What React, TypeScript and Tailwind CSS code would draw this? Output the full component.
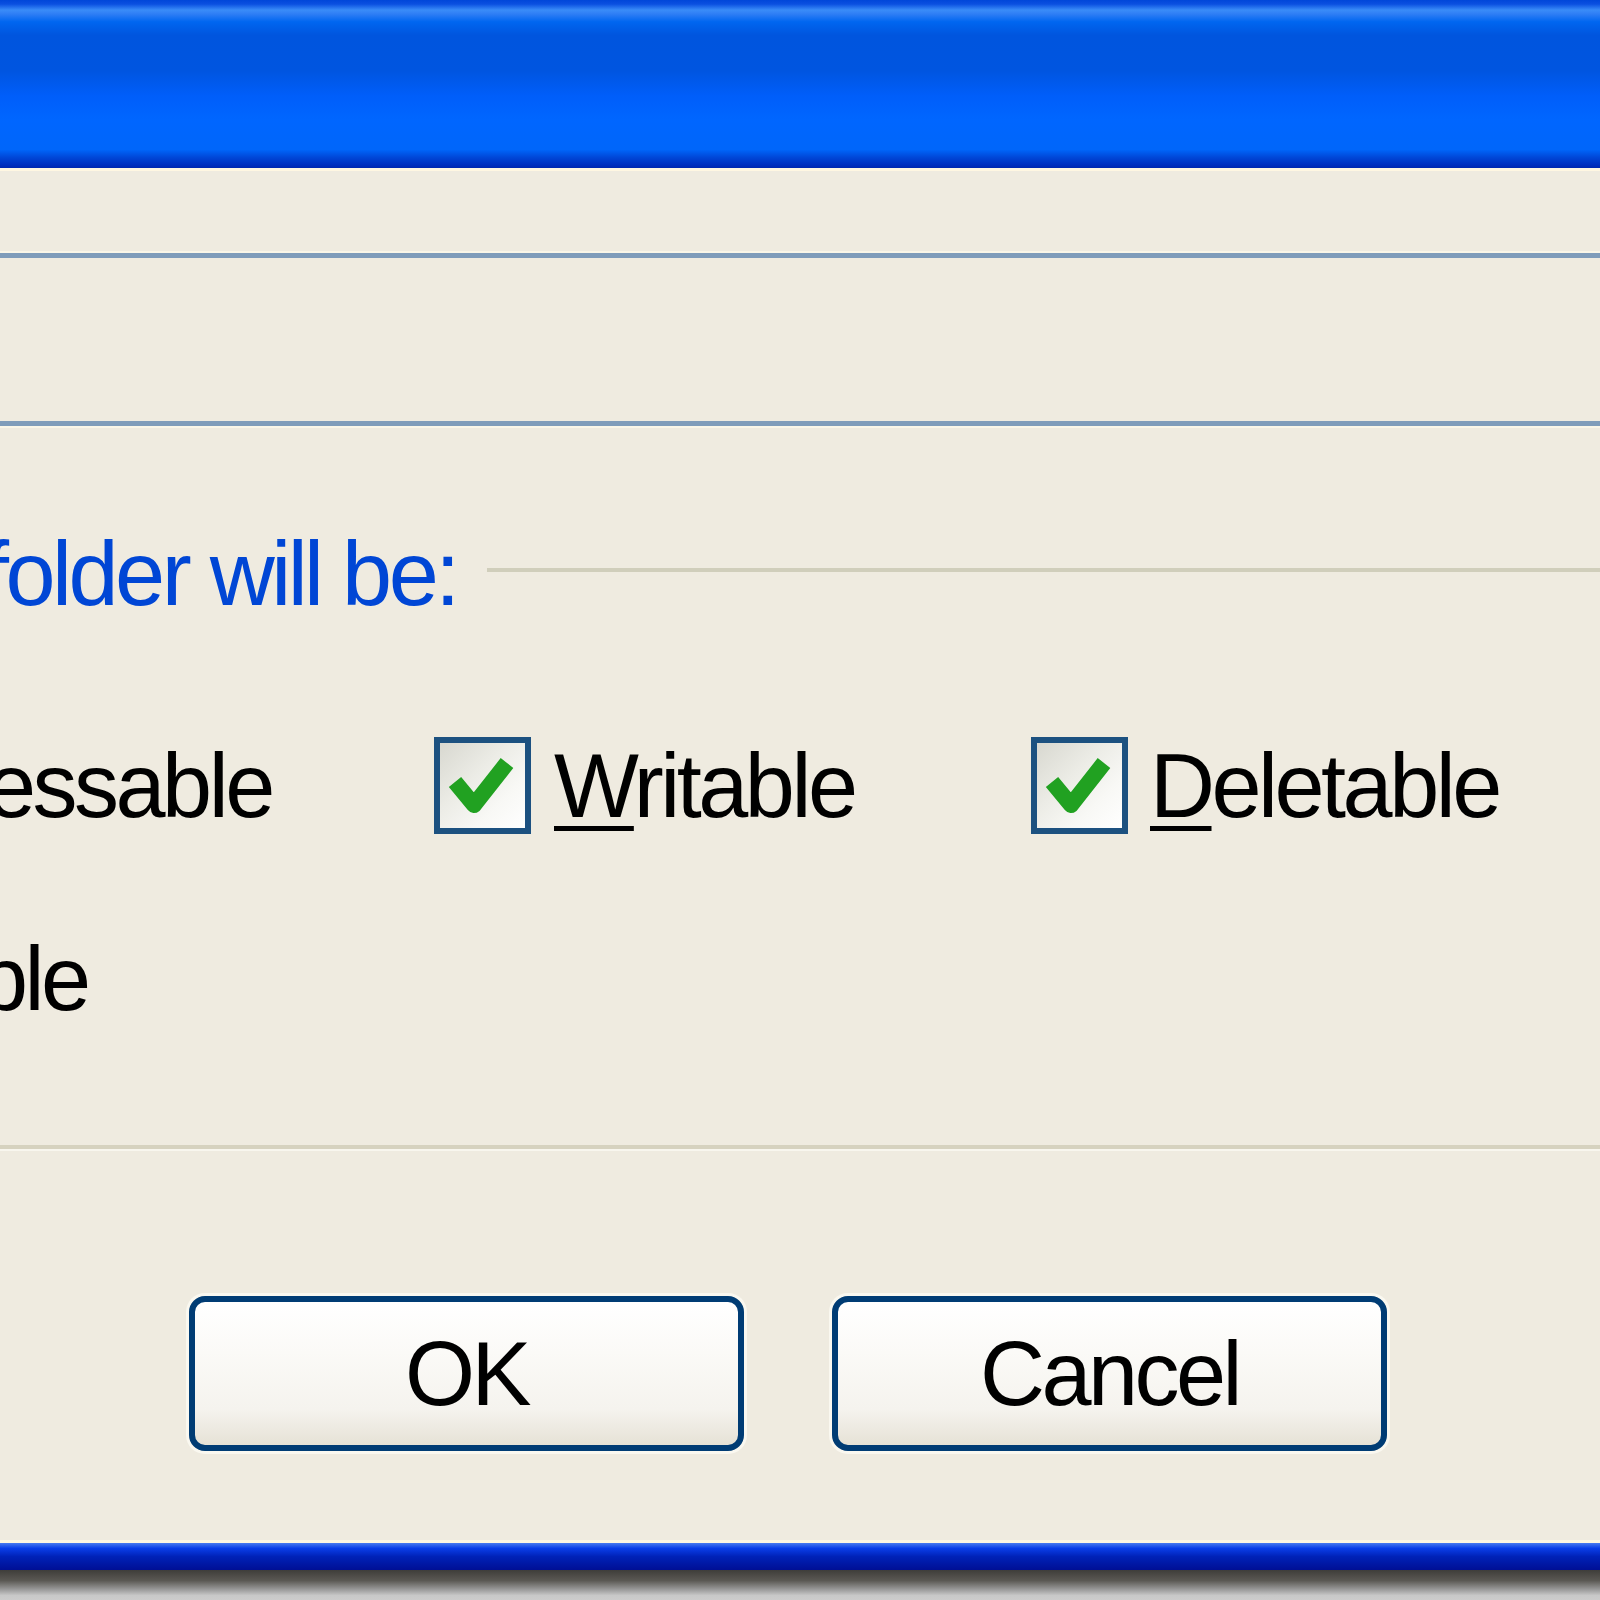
import React from 'react'

const font = { fontFamily: '"Liberation Sans", Arial, sans-serif' }

function CheckBox() {
  return (
    <div className="w-[97px] h-[97px] shrink-0 border-[6px] border-[#1c5180] bg-[linear-gradient(135deg,#d8d8d0_0%,#ececE6_40%,#f8f8f5_70%,#ffffff_100%)]">
      <svg viewBox="0 0 85 85" className="w-full h-full">
        <path d="M15 39 L34 62 L67 20" fill="none" stroke="#21a121" strokeWidth="16" strokeLinejoin="round" />
      </svg>
    </div>
  )
}

function XpButton({ label }: { label: string }) {
  return (
    <button className="w-[555px] h-[155px] rounded-[16px] border-[6px] border-[#003c74] bg-[linear-gradient(to_bottom,#ffffff_0%,#fbfaf7_35%,#f5f3ee_75%,#e6e2d6_100%)] shadow-[0_0_0_3px_#faf8f0] text-[90px] leading-none tracking-[-3.5px] text-black">
      {label}
    </button>
  )
}

export default function App() {
  return (
    <div className="w-[1600px] h-[1600px] overflow-hidden flex flex-col" style={font}>
      {/* title bar */}
      <div className="h-[168px] bg-[linear-gradient(to_bottom,#0046d9_0%,#0a4fe0_2.4%,#3a8cf8_6%,#2f7ef5_8.3%,#0066f0_13%,#0055de_21%,#0055e0_42%,#005efa_57%,#0066ff_71%,#0066fa_89%,#0045d5_94%,#0030c0_98%,#0028b0_100%)]" />
      <div className="h-[3px] bg-[#fff7e2]" />

      {/* dialog body */}
      <div className="h-[1369px] bg-[#efebe0] flex flex-col">
        <div className="h-[82px]" />
        <div className="h-[173px] border-y-[5px] border-[#7f9cba] shadow-[0_-2px_0_#faf6e8,0_2px_0_#faf6e8]" />

        <div className="h-[103px]" />
        <div className="h-[90px] flex items-center">
          <span className="text-[90px] leading-none tracking-[-3.5px] text-[#0046d5] ml-[-16px] whitespace-nowrap">
            folder will be:
          </span>
          <div className="flex-1 h-[4px] bg-[#d0cebb] ml-[30px] mb-[8px]" />
        </div>

        <div className="h-[118px]" />
        <div className="h-[97px] flex items-center text-[90px] leading-none tracking-[-3.5px] text-black">
          <div className="w-[434px] shrink-0">
            <span className="ml-[-14px] whitespace-nowrap">essable</span>
          </div>
          <div className="w-[597px] shrink-0 flex items-center gap-[23px]">
            <CheckBox />
            <span className="whitespace-nowrap">
              <span className="underline decoration-[5px] underline-offset-[9px]">W</span>ritable
            </span>
          </div>
          <div className="flex items-center gap-[22px]">
            <CheckBox />
            <span className="whitespace-nowrap">
              <span className="underline decoration-[5px] underline-offset-[9px]">D</span>eletable
            </span>
          </div>
        </div>

        <div className="h-[100px]" />
        <div className="h-[90px] flex items-center text-[90px] leading-none tracking-[-3.5px] text-black">
          <span className="ml-[-22px] whitespace-nowrap">ble</span>
        </div>

        <div className="h-[121px]" />
        <div className="h-[4px] bg-[#d6d2bf]" />
        <div className="h-[2px] bg-[#f8f6ee]" />

        <div className="h-[145px]" />
        <div className="flex gap-[88px] pl-[189px]">
          <XpButton label="OK" />
          <XpButton label="Cancel" />
        </div>
      </div>

      {/* bottom frame */}
      <div className="h-[3px] bg-[#fff7e2]" />
      <div className="h-[27px] bg-[linear-gradient(to_bottom,#4a7cf0_0%,#0a3ee8_20%,#0022b8_50%,#000f94_100%)]" />
      <div className="h-[30px] bg-[linear-gradient(to_bottom,#3e3d3a_0%,#5a5853_35%,#9a9a9a_65%,#c8c8c8_85%,#cccccc_100%)]" />
    </div>
  )
}
